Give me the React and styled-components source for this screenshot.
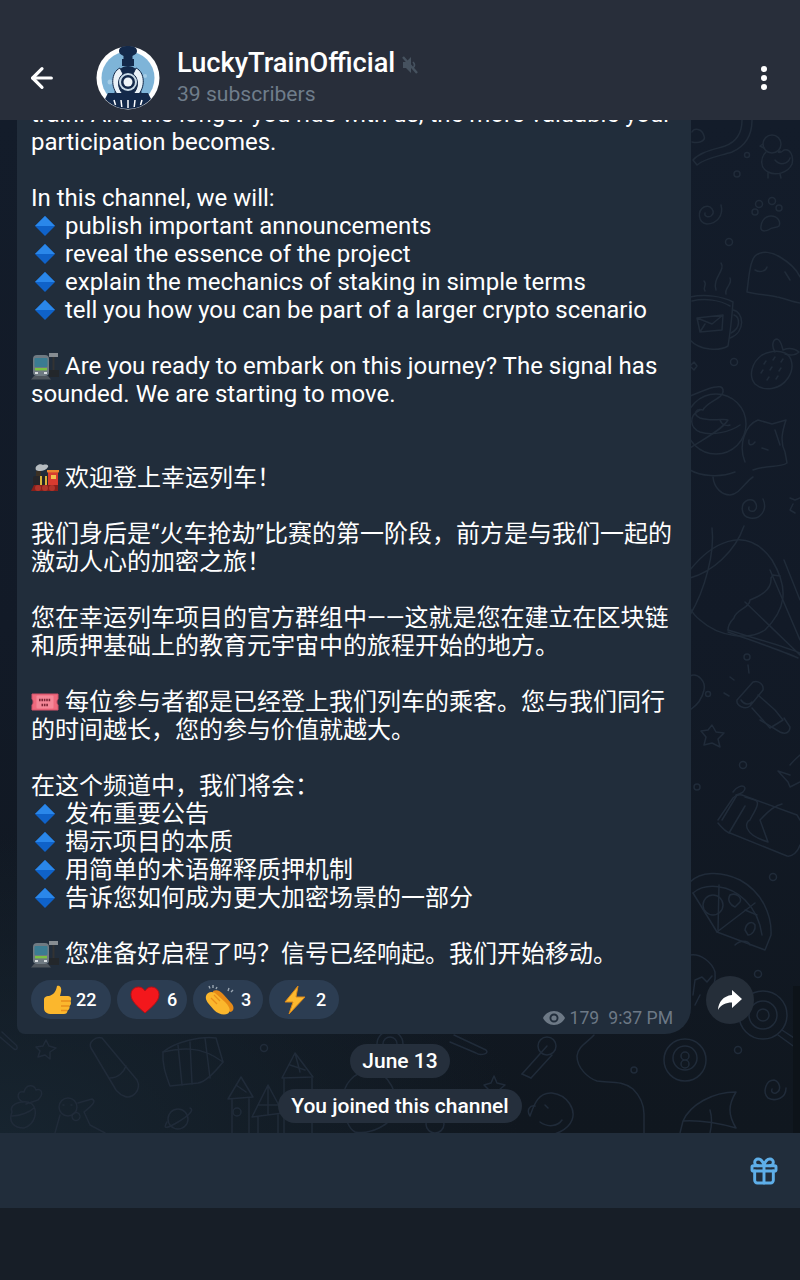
import React from 'react'
import styled, { createGlobalStyle } from 'styled-components'
import { ArrowLeft, Gift } from 'lucide-react'

const GlobalStyle = createGlobalStyle`
  html, body { margin: 0; padding: 0; background: #171e27; }
  #root { width: 800px; height: 1280px; }
  * { box-sizing: border-box; }
`

const Screen = styled.div`
  width: 800px;
  height: 1280px;
  display: flex;
  flex-direction: column;
  overflow: hidden;
  font-family: Roboto, "Noto Sans CJK SC", sans-serif;
  color: #fff;
`

const Header = styled.header`
  height: 120px;
  flex: none;
  background: #282e3a;
  padding: 46px 24px 0 26px;
  display: flex;
  align-items: flex-start;
  position: relative;
  z-index: 2;
`

const BackButton = styled.div`
  width: 32px;
  height: 32px;
  margin-top: 16px;
  display: flex;
  color: #fff;
`

const Avatar = styled.div`
  width: 64px;
  height: 64px;
  margin-left: 38px;
  flex: none;
`

const TitleBlock = styled.div`
  margin-left: 17px;
  flex: 1;
`

const TitleRow = styled.div`
  display: flex;
  align-items: center;
  height: 35px;
`

const Title = styled.div`
  font-size: 27.2px;
  font-weight: 500;
  line-height: 35px;
`

const Subtitle = styled.div`
  font-size: 21.1px;
  line-height: 26px;
  color: #6f7d8b;
`

const Dots = styled.div`
  display: flex;
  flex-direction: column;
  gap: 3px;
  margin: 20px 9px 0 0;
`

const Dot = styled.span`
  width: 6px;
  height: 6px;
  border-radius: 50%;
  background: #fff;
`

const Chat = styled.main`
  flex: 1;
  min-height: 0;
  position: relative;
  background:
    radial-gradient(520px 300px at 0% 100%, #17242f 0%, rgba(23, 36, 47, 0) 100%),
    linear-gradient(180deg, #131c2a 0%, #121a27 50%, #10171f 100%);
  display: flex;
  flex-direction: column;
  justify-content: flex-end;
  align-items: flex-start;
  overflow: hidden;
  padding: 0 0 10px 17px;
`

const Wallpaper = styled.svg`
  position: absolute;
  inset: 0;
  width: 800px;
  height: 1013px;
  fill: none;
  stroke: #202b39;
  stroke-width: 1.5;
  stroke-linecap: round;
  stroke-linejoin: round;
`

const RightEdge = styled.div`
  position: absolute;
  right: 0;
  bottom: 0;
  width: 7px;
  height: 147px;
  background: #0d1319;
`

const PostRow = styled.div`
  position: relative;
  display: flex;
  align-items: flex-end;
  flex: none;
`

const Bubble = styled.article`
  width: 674px;
  background: #212d3b;
  border-radius: 0 0 26px 8px;
  padding: 0 14px 14px;
`

const Body = styled.div`
  font-size: 24px;
  line-height: 28px;
  color: #fff;
  white-space: pre-wrap;
`

const Line = styled.div`
  min-height: 28px;
  display: flex;
  align-items: center;
  white-space: nowrap;
`

const EmojiSlot = styled.span`
  width: 28px;
  height: 28px;
  margin-right: 6px;
  display: inline-flex;
  flex: none;
  align-items: center;
  justify-content: center;
`

const Footer = styled.div`
  display: flex;
  justify-content: space-between;
  align-items: flex-end;
  margin-top: 12px;
`

const Reactions = styled.div`
  display: flex;
  gap: 6px;
  margin-bottom: 1px;
`

const Reaction = styled.div`
  width: ${p => p.$w}px;
  height: 39px;
  border-radius: 20px;
  background: #2c3d52;
  display: flex;
  align-items: center;
  padding-left: ${p => p.$pl}px;
  gap: ${p => p.$gap}px;
  font-size: 18px;
  font-weight: 500;
`

const Meta = styled.div`
  display: flex;
  align-items: center;
  color: #6d7986;
  font-size: 17.6px;
  line-height: 22px;
  margin: 0 4px -9px 0;
`

const Views = styled.span`
  margin: 0 9px 0 5px;
`

const ShareButton = styled.div`
  position: absolute;
  left: 689px;
  bottom: 10px;
  width: 48px;
  height: 48px;
  border-radius: 50%;
  background: #252e39;
  display: flex;
  align-items: center;
  justify-content: center;
`

const ServiceStack = styled.div`
  position: relative;
  align-self: stretch;
  margin: 10px 0 0 -17px;
  display: flex;
  flex-direction: column;
  align-items: center;
  gap: 11px;
`

const ServicePill = styled.div`
  height: 34px;
  padding: 0 ${p => p.$pad}px;
  border-radius: 17px;
  background: #252f3c;
  font-size: 21px;
  font-weight: 500;
  line-height: 34px;
  color: #fff;
`

const Composer = styled.div`
  height: 75px;
  flex: none;
  background: #212d3b;
  display: flex;
  align-items: center;
  justify-content: flex-end;
  padding-right: 20px;
  color: #5eaee8;
`

const NavBar = styled.div`
  height: 72px;
  flex: none;
  background: #171e27;
`

const TrainLogo = () => (
  <svg width="64" height="64" viewBox="0 0 64 64">
    <circle cx="32" cy="32" r="31.5" fill="#fff" />
    <circle cx="32" cy="32" r="26.5" fill="#7eb4d8" />
    <circle cx="49" cy="30" r="2" fill="#a5cde6" />
    <circle cx="14" cy="36" r="2.5" fill="#a5cde6" />
    <path d="M23 5 C23 1 27 0 32 0 C37 0 41 1 41 5 C41 8 38 9 36.5 10 V13 H38 V20 H26 V13 H27.5 V10 C26 9 23 8 23 5 Z" fill="#13294a" />
    <path d="M21 32 C21 24 26 20 32 20 C38 20 43 24 43 32 L46 50 H18 Z" fill="#13294a" />
    <path d="M24 22 C15 26 14 42 23 50 L27 48 C21 42 21 32 27 28 Z" fill="#eaf2f8" stroke="#13294a" />
    <path d="M40 22 C49 26 50 42 41 50 L37 48 C43 42 43 32 37 28 Z" fill="#eaf2f8" stroke="#13294a" />
    <circle cx="32" cy="36" r="9" fill="#c9dbe7" />
    <circle cx="32" cy="36" r="7" fill="#13294a" />
    <circle cx="32" cy="36" r="4.5" fill="#eef4f8" />
    <path d="M12 47 H52 L55 53 C48 60 40 63 32 63 C24 63 16 60 9 53 Z" fill="#13294a" />
    <path d="M18 54 l1.5 5 M25 54 l.8 7 M32 54 v8 M39 54 l-.8 7 M46 54 l-1.5 5" stroke="#fff" strokeWidth="1.5" />
  </svg>
)

const MuteIcon = () => (
  <svg width="16" height="18" viewBox="0 0 16 18" style={{ marginLeft: 7, marginTop: 2 }}>
    <path d="M1 6 H4 L9 1 V17 L4 12 H1 Z" fill="#46525f" />
    <path d="M11 6 C13 8 13 10 11 12" stroke="#46525f" strokeWidth="1.6" fill="none" />
    <path d="M1 1 L15 17" stroke="#46525f" strokeWidth="2.4" />
  </svg>
)

const EyeFilled = () => (
  <svg width="22" height="14" viewBox="0 0 22 14">
    <path fillRule="evenodd" d="M11 0 C16 0 20 3 22 7 C20 11 16 14 11 14 C6 14 2 11 0 7 C2 3 6 0 11 0 Z M11 2.5 A4.5 4.5 0 1 0 11 11.5 A4.5 4.5 0 1 0 11 2.5 Z" fill="#6d7986" />
    <circle cx="11" cy="7" r="2.6" fill="#6d7986" />
  </svg>
)

const Diamond = () => (
  <svg width="22" height="22" viewBox="0 0 22 22">
    <path d="M11 1 L21 11 L11 21 L1 11 Z" fill="#0f62c9" />
    <path d="M11 1 L21 11 L1 11 Z" fill="#2a87ea" />
  </svg>
)

const Metro = () => (
  <svg width="28" height="28" viewBox="0 0 28 28">
    <rect x="2" y="3" width="16" height="21" rx="4" fill="#6f7a82" />
    <rect x="3.5" y="6" width="13" height="9" rx="1" fill="#3b7c92" />
    <rect x="4" y="16" width="12" height="2.4" fill="#7cc242" />
    <rect x="4" y="20" width="3" height="2" fill="#d8dcdf" />
    <rect x="13" y="20" width="3" height="2" fill="#d8dcdf" />
    <rect x="18" y="1" width="9" height="4" fill="#878d92" />
    <rect x="21.5" y="5" width="2" height="14" fill="#333" />
    <rect x="18" y="18" width="10" height="7" fill="#23272b" />
    <path d="M0 27.5 L3 24 H17 L20 27.5 Z" fill="#4f565d" />
  </svg>
)

const Locomotive = () => (
  <svg width="28" height="28" viewBox="0 0 28 28">
    <path d="M5 6 C3 2 9 -1 12 1 C15 0 18 1 17 3 C15 7 8 8 5 6 Z" fill="#b6bcc0" />
    <rect x="5" y="7" width="5" height="6" fill="#3a3025" />
    <rect x="2" y="12" width="17" height="9" rx="2" fill="#26262a" />
    <rect x="9" y="12" width="2" height="9" fill="#d9b43b" />
    <rect x="14" y="12" width="2" height="9" fill="#d9b43b" />
    <rect x="17" y="8" width="10" height="13" fill="#d83b2f" />
    <rect x="16" y="6" width="12" height="2.4" fill="#e9852f" />
    <rect x="20" y="11" width="5" height="4" fill="#f3c04d" />
    <path d="M0 27 L3 21 H27 V27 Z" fill="#8a1f1a" />
    <circle cx="7" cy="24" r="3" fill="#b0352b" />
    <circle cx="14" cy="24" r="3" fill="#b0352b" />
    <circle cx="21" cy="24" r="3" fill="#b0352b" />
  </svg>
)

const Ticket = () => (
  <svg width="28" height="20" viewBox="0 0 28 20">
    <path d="M1 2 H27 V7 C25.5 8 25.5 12 27 13 V18 H1 V13 C2.5 12 2.5 8 1 7 Z" fill="#ee6a7e" stroke="#d4536a" />
    <rect x="5.5" y="3.5" width="17" height="13" rx="1" fill="#f58798" />
    <path d="M8 8 H20 M10.5 13 H17.5" stroke="#7c2636" strokeWidth="2.4" strokeDasharray="1.6 .8" />
  </svg>
)

const ThumbsUp = () => (
  <svg width="30" height="30" viewBox="0 0 30 30">
    <path d="M2 15 C2 12 4 11 7 11 C11 10 14 7 15 1 C18 0 20 3 19 7 L18 11 H26 C29 11 30 14 28.5 16 C29.5 18 29 20 27.5 21 C28 23 27 25 25.5 25.5 C25.5 28 24 29 22 29 H10 C5 29 2 27 2 23 Z" fill="#fbb72d" />
    <path d="M19 16 H28 M19 21 H27 M19 25.5 H25" stroke="#e98f1a" strokeWidth="1.4" />
  </svg>
)

const Heart = () => (
  <svg width="30" height="28" viewBox="0 0 30 28">
    <path d="M15 27 C7 20 1 15 1 8.5 C1 4 4.5 1 8.5 1 C11 1 13.5 2.3 15 5 C16.5 2.3 19 1 21.5 1 C25.5 1 29 4 29 8.5 C29 15 23 20 15 27 Z" fill="#f3171c" stroke="#b90f14" />
  </svg>
)

const Clap = () => (
  <svg width="30" height="30" viewBox="0 0 30 30">
    <path d="M8 6 C12 4 15 6 18 9 L27 19 C30 23 28 27 25 27 L9 12 Z" fill="#e68a17" />
    <path d="M1 11 C2 7 7 6 10 8 L20 17 C25 22 26 26 23 28.5 C19 31 13 29 9 25 L3 18 C1 15 0.5 13 1 11 Z" fill="#fbb72d" />
    <path d="M6 13 L12 19 M9 10 L15 16" stroke="#e98f1a" strokeWidth="1.2" />
    <path d="M4 1 L5 3.5 M8 0 V3 M12 2 L11 4 M24 3 L23 6 M28 5 L26 7" stroke="#9aa6b2" strokeWidth="1.4" />
  </svg>
)

const Bolt = () => (
  <svg width="24" height="30" viewBox="0 0 24 30">
    <path d="M15 1 L2 17 H10 L6 29 L22 12 H13 Z" fill="#fdb92e" stroke="#d9871a" strokeWidth="1" />
  </svg>
)

const ShareArrow = () => (
  <svg width="26" height="22" viewBox="0 0 26 22">
    <path d="M15 1 L25 10 L15 19 V13.5 C9 13.5 4 15.5 1 21 C1.5 13 6 7 15 6 Z" fill="#fff" />
  </svg>
)

// wallpaper doodles, coordinates are the chat area's own (y = screen y - 120)
const Doodles = () => (
  <Wallpaper viewBox="0 0 800 1013">
    {/* ribbon, duck, paw */}
    <path d="M742 0 C742 14 736 22 725 26 C712 30 700 32 693 40 L697 45 C705 38 720 36 732 32 C746 26 752 14 752 0" />
    <path d="M704 16 C702 8 694 8 692 12 M692 22 C700 24 706 20 704 16" />
    <circle cx="747" cy="35" r="2.5" />
    <circle cx="737" cy="54" r="3" />
    <circle cx="772" cy="24" r="9" />
    <path d="M763 24 L760 26 L764 28" />
    <path d="M766 32 C760 38 760 48 768 52 C776 56 788 53 792 44 C794 36 790 28 784 30 C780 34 776 32 780 31" />
    <path d="M775 40 C780 46 788 44 790 38 M768 53 L768 58 M780 54 L781 58" />
    <path d="M721 85 C724 96 716 104 707 104 C698 103 697 91 704 87 C711 84 716 92 711 96 C708 98 704 96 705 93" />
    <path d="M761 109 C760 102 765 96 771 96 C778 96 781 102 779 106 C777 108 773 107 770 109 C767 111 762 112 761 109 Z" />
    <circle cx="759" cy="84" r="3.5" /><circle cx="772" cy="81" r="3.5" /><circle cx="779" cy="88" r="3" /><circle cx="755" cy="92" r="3" />
    <circle cx="729" cy="122" r="3.5" />
    {/* fish */}
    <path d="M747 172 C749 155 750 142 755 136 C762 130 772 132 780 137 C790 143 797 150 800 157 M800 183 C792 182 784 178 777 177 C770 175 760 175 747 172" />
    <path d="M755 150 C760 153 766 151 767 147 M785 152 L790 160" />
    {/* cup */}
    <path d="M690 177 C705 174 722 176 733 182 C732 196 730 214 728 226 C720 231 700 231 690 220" />
    <path d="M692 181 C705 178 720 180 730 186" />
    <path d="M733 190 C744 192 746 212 730 218 M734 195 C740 197 741 208 731 213" />
    <path d="M697 198 L723 195 L722 210 L700 212 Z M697 198 L712 204 L723 195 M705 204 L700 212" />
    <path d="M704 161 C708 165 702 167 705 171 M721 143 C726 150 712 158 716 170 M730 158 C733 164 724 168 726 174" />
    {/* strawberry */}
    <path d="M762 235 C752 242 748 256 755 264 C764 272 780 270 788 258 C795 248 792 236 785 233 C778 230 770 231 762 235 Z" />
    <path d="M775 232 C771 226 773 219 777 219 C781 220 782 226 783 230 C788 228 794 228 799 232 C796 235 790 236 785 234" />
    <path d="M764 244 l2 -3 M773 240 l2 -3 M781 242 l2 -3 M761 253 l2 -3 M770 250 l2 -3 M779 251 l2 -3 M767 260 l2 -3 M776 259 l2 -3" />
    <circle cx="734" cy="242" r="3.5" />
    <path d="M690 246 L694 242 L697 246 L694 250 Z" />
    {/* blob and star cat */}
    <path d="M690 276 C705 270 722 262 723 270 C725 278 706 282 703 290 C696 288 692 294 700 298 C712 302 725 298 728 300 C722 310 702 320 690 328" />
    <path d="M700 290 C688 296 690 308 700 312 C712 316 730 312 740 305 M720 300 C722 306 728 306 730 305" />
    <circle cx="716" cy="304" r="30" />
    <path d="M745 342 C738 325 745 305 758 300 L772 304 L786 300 C782 312 780 322 785 332 L787 343 C780 348 765 345 753 350" />
    <path d="M749 320 C748 326 752 326 755 322 M762 328 L768 330 M775 310 L780 325" />
    <path d="M713 357 C714 368 722 375 730 375 C740 374 745 362 753 357" />
    <path d="M690 350 C700 356 720 358 735 352" />
    <path d="M763 379 C768 390 760 400 750 398 C740 396 740 383 748 380 C756 378 759 388 754 391 C750 392 748 390 749 387" />
    <path d="M790 378 L795 380 L800 378 M793 384 L790 390 L795 393" />
    {/* balloon */}
    <path d="M690 450 C710 425 745 402 772 440 C790 470 785 490 765 510 C750 520 720 518 700 500 C695 496 692 492 690 488" />
    <path d="M712 408 C715 432 705 470 690 495 M744 406 C735 432 712 452 690 458" />
    <path d="M771 458 L773 455 L780 456 M771 458 C772 470 760 476 750 480 C750 488 735 490 734 498 C730 502 728 507 728 510" />
    <path d="M728 510 C750 517 780 525 800 533 M728 512 C750 520 780 530 798 538 M770 450 L800 520 M745 482 L800 535 M784 440 L800 480" />
    {/* telescope */}
    <circle cx="747" cy="537" r="3" />
    <path d="M748 545 L749 553 M730 557 L734 560 M724 573 L729 576" />
    <circle cx="708" cy="574" r="2.5" />
    <path d="M737 580 L753 562 C758 560 764 564 763 570 L750 586 C745 590 736 586 737 580 Z M741 580 C744 585 750 585 752 582" />
    <path d="M758 575 L775 590 L783 600 L770 608 L752 588" />
    <path d="M690 556 C698 552 706 562 704 570 C702 580 696 586 690 590" />
    {/* star, chocolate, pizza */}
    <path d="M712 605 L716 612 L724 613 L718 619 L720 627 L712 623 L704 625 L706 617 L701 611 L708 610 Z" />
    <path d="M760 600 L780 612 C786 615 790 612 790 607 L784 598" />
    <path d="M790 645 C794 640 800 635 800 635 M790 655 L778 651 L788 662 L790 667 L800 662" />
    <circle cx="743" cy="645" r="3.5" />
    <circle cx="697" cy="667" r="3" />
    <path d="M733 672 C736 667 743 664 745 668 C745 672 740 674 736 675" />
    <path d="M718 700 L733 678 C736 675 738 674 742 675 L797 695 L800 700 M718 703 C722 708 726 712 730 713 L787 736 C792 737 798 732 800 725" />
    <path d="M729 713 L745 686 M737 675 L722 700 M745 677 L755 680 C762 682 752 695 750 700 C745 702 742 714 768 722 L760 700 C765 695 772 686 782 684" />
    <circle cx="773" cy="757" r="3.5" />
    <path d="M690 762 C700 752 720 750 740 760 C762 772 772 795 771 815 L765 830 L717 812" />
    <path d="M693 773 C706 762 730 765 745 780 C755 790 760 800 762 815" />
    <path d="M693 773 L717 812 L755 783 M719 765 L718 810" />
    <circle cx="713" cy="785" r="10" />
    <path d="M730 775 C737 772 742 778 740 782 L735 787 C730 785 727 780 730 775 Z M745 810 C746 803 752 800 755 805 C756 810 752 815 748 815 Z M745 790 L757 795" />
    <path d="M735 825 C740 820 748 820 750 825" />
    <circle cx="758" cy="854" r="3.5" />
    <path d="M690 835 C700 833 712 842 715 852 C716 860 713 870 708 878 M695 860 L702 857 L707 862 L712 856 M695 860 L693 875 M700 875 L695 885" />
    <circle cx="763" cy="895" r="24" /><circle cx="763" cy="895" r="14" /><circle cx="763" cy="895" r="6" />
    <path d="M782 910 L800 922 M778 915 L796 928" />
    <circle cx="738" cy="930" r="3.5" />
    {/* bottom band, left to right */}
    <path d="M0 917 L14 929 C18 931 18 926 15 924 L2 912" />
    <path d="M46 920 L49 926 L56 928 L50 932 L50 939 L45 935 L38 937 L40 931 L36 927 L43 926 Z" />
    <path d="M91 928 C88 922 96 916 102 918 L137 960 C142 970 132 980 124 976 C120 975 118 972 116 970 L91 928 Z M110 958 C118 958 124 952 126 946" />
    <path d="M163 932 C175 922 200 916 216 918 L223 942 C215 952 205 962 198 963 L170 966 C166 955 162 945 163 932 Z" />
    <path d="M178 925 L182 965 M190 922 L192 964 M205 918 L210 958 M163 932 C180 928 200 925 223 942" />
    <circle cx="264" cy="928" r="3.5" />
    <path d="M23 982 C15 978 18 970 24 972 C26 964 34 964 36 970 C42 968 44 974 38 980 L26 984" />
    <path d="M12 992 C8 982 26 980 32 984 C38 990 36 1004 24 1008 C14 1008 8 1002 12 992 Z M12 996 C20 996 30 992 34 988" />
    <circle cx="68" cy="987" r="9" />
    <path d="M63 985 L64 985 M71 985 L72 985 M78 983 L92 979 C96 981 94 984 84 992 L90 1005 L105 1013 M60 995 L55 1013 M80 996 A4 4 0 1 0 80 997" />
    <circle cx="178" cy="999" r="10" />
    <path d="M167 1002 C162 1010 168 1008 178 1002 C188 996 195 990 190 988" />
    <path d="M228 979 L241 957 L253 977 L228 979 M232 979 V1013 M249 978 V1013 M236 965 L246 972" />
    <circle cx="237" cy="992" r="4" />
    <path d="M252 997 L268 965 L283 993 L252 997 M258 997 V1013 M278 995 V1013 M268 965 V995 M258 985 H278" />
    <path d="M282 958 L295 933 L313 957 L282 958 M284 958 V1013 M312 957 V1013 M290 945 L305 950 M295 933 L300 952" />
    <path d="M344 985 C340 965 355 950 372 951 C390 953 398 975 396 990 C392 1005 370 1015 355 1012 C348 1008 345 1000 344 985 Z" />
    <path d="M320 985 C326 980 340 980 350 985 C345 995 335 998 325 995 Z" />
    <circle cx="390" cy="924" r="7" /><circle cx="390" cy="924" r="13" />
    <path d="M454 915 L486 930 C490 934 480 936 476 933 L450 922" />
    <path d="M494 956 L497 963 L505 965 L499 970 L500 978 L494 974 L487 977 L489 970 L484 965 L491 963 Z" />
    <circle cx="435" cy="1004" r="9" />
    <path d="M522 954 L547 926 M531 958 L552 935" />
    <circle cx="547" cy="926" r="9" />
    <path d="M522 954 L531 958" />
    <path d="M530 996 C534 985 538 972 552 973 C568 975 576 990 572 1000 C568 1010 555 1016 540 1016 M530 996 C526 990 530 985 535 986 M545 985 L548 988 M540 1002 C548 1008 558 1006 562 1000" />
    <path d="M594 915 C588 922 578 926 577 936 C577 948 588 958 597 961 C610 963 622 960 633 969 C642 978 644 986 644 994 L644 1013" />
    <circle cx="634" cy="950" r="3" />
    <circle cx="685" cy="940" r="21" /><circle cx="685" cy="938" r="12" />
    <path d="M681 936 a4 4 0 1 0 8 0 a4 4 0 1 0 -8 0 M681 944 a4 4 0 1 0 8 0 a4 4 0 1 0 -8 0" />
    <path d="M683 1001 C690 985 712 972 736 972 C728 985 728 995 736 1008 C718 1003 700 1000 683 1001 Z M683 1001 L680 1013 M710 990 C712 997 712 1005 710 1013" />
    <path d="M786 968 C786 978 776 982 768 978 C762 972 766 960 774 960 C780 962 782 970 776 973 C772 974 771 971 772 969" />
  </Wallpaper>
)

const enLines = [
  'participation becomes.',
  '',
  'In this channel, we will:',
]

const enBullets = [
  'publish important announcements',
  'reveal the essence of the project',
  'explain the mechanics of staking in simple terms',
  'tell you how you can be part of a larger crypto scenario',
]

const zhBullets = ['发布重要公告', '揭示项目的本质', '用简单的术语解释质押机制', '告诉您如何成为更大加密场景的一部分']

const Bullet = ({ children }) => (
  <Line>
    <EmojiSlot><Diamond /></EmojiSlot>
    {children}
  </Line>
)

export default function App() {
  return (
    <>
      <GlobalStyle />
      <Screen>
        <Header>
          <BackButton><ArrowLeft size={32} strokeWidth={2.4} /></BackButton>
          <Avatar><TrainLogo /></Avatar>
          <TitleBlock>
            <TitleRow>
              <Title>LuckyTrainOfficial</Title>
              <MuteIcon />
            </TitleRow>
            <Subtitle>39 subscribers</Subtitle>
          </TitleBlock>
          <Dots><Dot /><Dot /><Dot /></Dots>
        </Header>

        <Chat>
          <Doodles />
          <RightEdge />
          <PostRow>
            <Bubble>
              <Body>
                <Line>train! And the longer you ride with us, the more valuable your</Line>
                {enLines.map((t, i) => <Line key={i}>{t}</Line>)}
                {enBullets.map(t => <Bullet key={t}>{t}</Bullet>)}
                <Line />
                <Line><EmojiSlot><Metro /></EmojiSlot>Are you ready to embark on this journey? The signal has</Line>
                <Line>sounded. We are starting to move.</Line>
                <Line />
                <Line />
                <Line><EmojiSlot><Locomotive /></EmojiSlot>欢迎登上幸运列车！</Line>
                <Line />
                <Line>我们身后是“火车抢劫”比赛的第一阶段，前方是与我们一起的</Line>
                <Line>激动人心的加密之旅！</Line>
                <Line />
                <Line>您在幸运列车项目的官方群组中——这就是您在建立在区块链</Line>
                <Line>和质押基础上的教育元宇宙中的旅程开始的地方。</Line>
                <Line />
                <Line><EmojiSlot><Ticket /></EmojiSlot>每位参与者都是已经登上我们列车的乘客。您与我们同行</Line>
                <Line>的时间越长，您的参与价值就越大。</Line>
                <Line />
                <Line>在这个频道中，我们将会：</Line>
                {zhBullets.map(t => <Bullet key={t}>{t}</Bullet>)}
                <Line />
                <Line><EmojiSlot><Metro /></EmojiSlot>您准备好启程了吗？信号已经响起。我们开始移动。</Line>
              </Body>
              <Footer>
                <Reactions>
                  <Reaction $w={80} $pl={11} $gap={4}><ThumbsUp />22</Reaction>
                  <Reaction $w={70} $pl={13} $gap={7}><Heart />6</Reaction>
                  <Reaction $w={70} $pl={12} $gap={6}><Clap />3</Reaction>
                  <Reaction $w={70} $pl={14} $gap={9}><Bolt />2</Reaction>
                </Reactions>
                <Meta>
                  <EyeFilled />
                  <Views>179</Views>
                  9:37 PM
                </Meta>
              </Footer>
            </Bubble>
            <ShareButton><ShareArrow /></ShareButton>
          </PostRow>
          <ServiceStack>
            <ServicePill $pad={12}>June 13</ServicePill>
            <ServicePill $pad={13}>You joined this channel</ServicePill>
          </ServiceStack>
        </Chat>

        <Composer><Gift size={32} strokeWidth={2.2} /></Composer>
        <NavBar />
      </Screen>
    </>
  )
}
